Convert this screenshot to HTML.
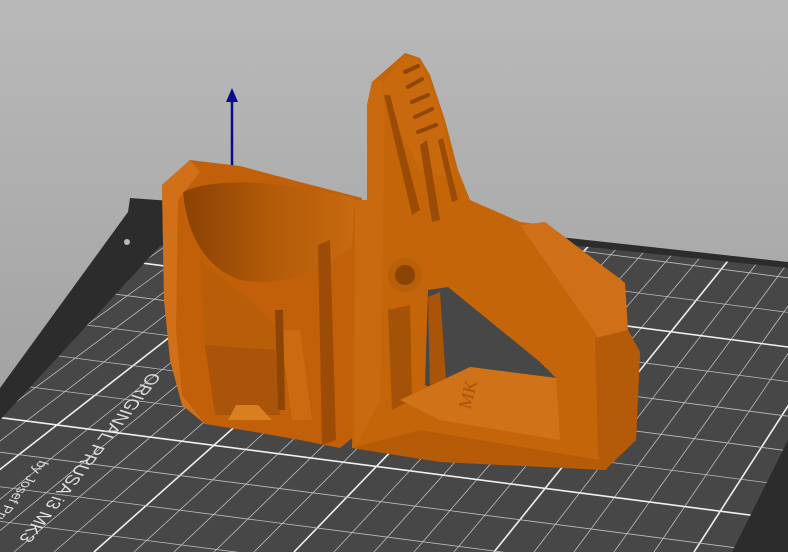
<!DOCTYPE html>
<html><head><meta charset="utf-8"><style>
html,body{margin:0;padding:0;width:788px;height:552px;overflow:hidden;background:#a8a8a8}
svg{display:block}
</style></head><body>
<svg width="788" height="552" viewBox="0 0 788 552" xmlns="http://www.w3.org/2000/svg">
<defs>
<linearGradient id="bg" x1="0" y1="0" x2="0" y2="1">
<stop offset="0" stop-color="#b9b9b9"/><stop offset="1" stop-color="#9a9a9a"/></linearGradient>
<linearGradient id="cav" x1="0" y1="0" x2="1" y2="0">
<stop offset="0" stop-color="#8a4204"/><stop offset="0.5" stop-color="#b15a08"/><stop offset="1" stop-color="#c86a10"/></linearGradient>
<clipPath id="gc"><polygon points="160,246 350,222 788,268 788,440 732,552 0,552 0,420"/></clipPath>
<clipPath id="all"><rect width="788" height="552"/></clipPath>
</defs>
<g clip-path="url(#all)">
<rect width="788" height="552" fill="url(#bg)"/>
<polygon points="130,198 350,214 788,262 788,552 0,552 0,388 128,212" fill="#2c2c2c"/>
<polygon points="160,246 350,222 788,268 788,440 732,552 0,552 0,420" fill="#474747"/>
<g clip-path="url(#gc)" stroke="#bdbdbd" stroke-width="0.8" id="grid"></g>
<circle cx="127" cy="242" r="3" fill="#bbb"/>
<text transform="matrix(-0.62,0.79,-0.95,-0.3,150,372)" font-family="Liberation Sans, sans-serif" font-size="18" fill="#ddd">ORIGINAL PRUSA i3 MK3</text>
<text transform="matrix(-0.62,0.79,-0.95,-0.3,40,460)" font-family="Liberation Sans, sans-serif" font-size="14" fill="#ddd">by Josef Prusa</text>
<!-- axes -->
<line x1="232" y1="96" x2="232" y2="168" stroke="#0a0a8a" stroke-width="2.5"/>
<polygon points="226,102 232,88 238,102" fill="#0a0a8a"/>
<line x1="300" y1="186" x2="318" y2="190" stroke="#2c9a2c" stroke-width="3"/>
<!-- cup body -->
<polygon points="162,185 190,160 240,166 300,182 362,198 368,425 340,448 300,440 255,432 205,424 182,405 172,360 164,300" fill="#c2600a"/>
<polygon points="162,185 190,160 200,172 178,200 176,330 182,395 205,424 182,405 170,360 164,300" fill="#d2701a"/>
<path d="M183,192 Q230,170 355,198 L352,246 Q300,290 240,280 Q190,262 183,192 Z" fill="url(#cav)"/>
<polygon points="200,260 205,345 210,380 270,385 300,390 300,350 250,300" fill="#b85d08"/>
<polygon points="205,345 275,350 280,415 215,415" fill="#a9540a"/>
<polygon points="280,330 300,330 312,420 292,420" fill="#cc6a12"/>
<polygon points="275,310 283,310 285,410 278,410" fill="#8c4505"/>
<polygon points="318,245 330,240 336,440 322,445" fill="#9c4c06"/>
<polygon points="236,405 258,405 272,420 228,420" fill="#d8801f"/>
<!-- tower -->
<polygon points="367,105 372,82 405,53 420,58 430,75 445,120 458,170 470,200 520,222 545,225 622,280 628,330 640,352 636,440 605,470 440,455 352,448 355,200 367,200" fill="#c46509"/>
<polygon points="367,105 372,82 382,80 385,110 380,400 355,448 355,200 367,200" fill="#c96a10"/>
<polygon points="381,85 405,55 420,60 440,110 455,180 420,170 395,120" fill="#c8690e"/>
<g stroke="#8f4706" stroke-width="4" stroke-linecap="round">
<line x1="405" y1="72" x2="418" y2="66"/><line x1="408" y1="87" x2="422" y2="79"/>
<line x1="412" y1="102" x2="428" y2="95"/><line x1="415" y1="117" x2="432" y2="109"/>
<line x1="418" y1="132" x2="436" y2="125"/>
</g>
<polygon points="384,95 390,95 420,210 412,215" fill="#9a4c06"/>
<polygon points="420,145 427,140 440,220 432,222" fill="#9a4c06"/>
<polygon points="438,140 443,138 458,200 452,202" fill="#9a4c06"/>
<polygon points="520,225 545,222 625,283 628,330 600,340" fill="#cf7018"/>
<polygon points="595,338 628,330 640,352 636,440 605,470 598,455" fill="#b35b08"/>
<!-- hole -->
<polygon points="428,290 448,287 540,362 556,378 470,367 442,392 425,385" fill="#474747"/>
<polygon points="428,297 440,292 446,380 430,392" fill="#a8540a"/>
<circle cx="405" cy="275" r="17" fill="#b86008"/>
<circle cx="405" cy="275" r="10" fill="#8a4404"/>
<polygon points="388,310 410,305 412,400 392,410" fill="#a45208"/>
<polygon points="400,400 470,367 556,378 560,440 440,420" fill="#d07218"/>
<text transform="translate(470,410) rotate(-75)" font-family="Liberation Serif, serif" font-size="18" fill="#a65408">MK</text>
<polygon points="352,448 420,430 600,460 605,470 440,462" fill="#b65c08"/>
</g>
</svg>
<script>
(function(){var g=document.getElementById('grid');var ns='http://www.w3.org/2000/svg';
var VX=1500,VY=-700;
for(var k=-20;k<30;k++){var x0=494+40*k;var l=document.createElementNS(ns,'line');
l.setAttribute('x1',x0);l.setAttribute('y1',552);
l.setAttribute('x2',VX);l.setAttribute('y2',VY);
if(k%5==0){l.setAttribute('stroke','#f0f0f0');l.setAttribute('stroke-width','1.6');}
g.appendChild(l);}
for(var j=-10;j<12;j++){var yr=347+34.6*j;var l2=document.createElementNS(ns,'line');
l2.setAttribute('x1',788);l2.setAttribute('y1',yr);l2.setAttribute('x2',0);l2.setAttribute('y2',yr-788*0.13);
if(((j%5)+5)%5==0){l2.setAttribute('stroke','#f0f0f0');l2.setAttribute('stroke-width','1.6');}
g.appendChild(l2);}
})();
</script>
</body></html>
